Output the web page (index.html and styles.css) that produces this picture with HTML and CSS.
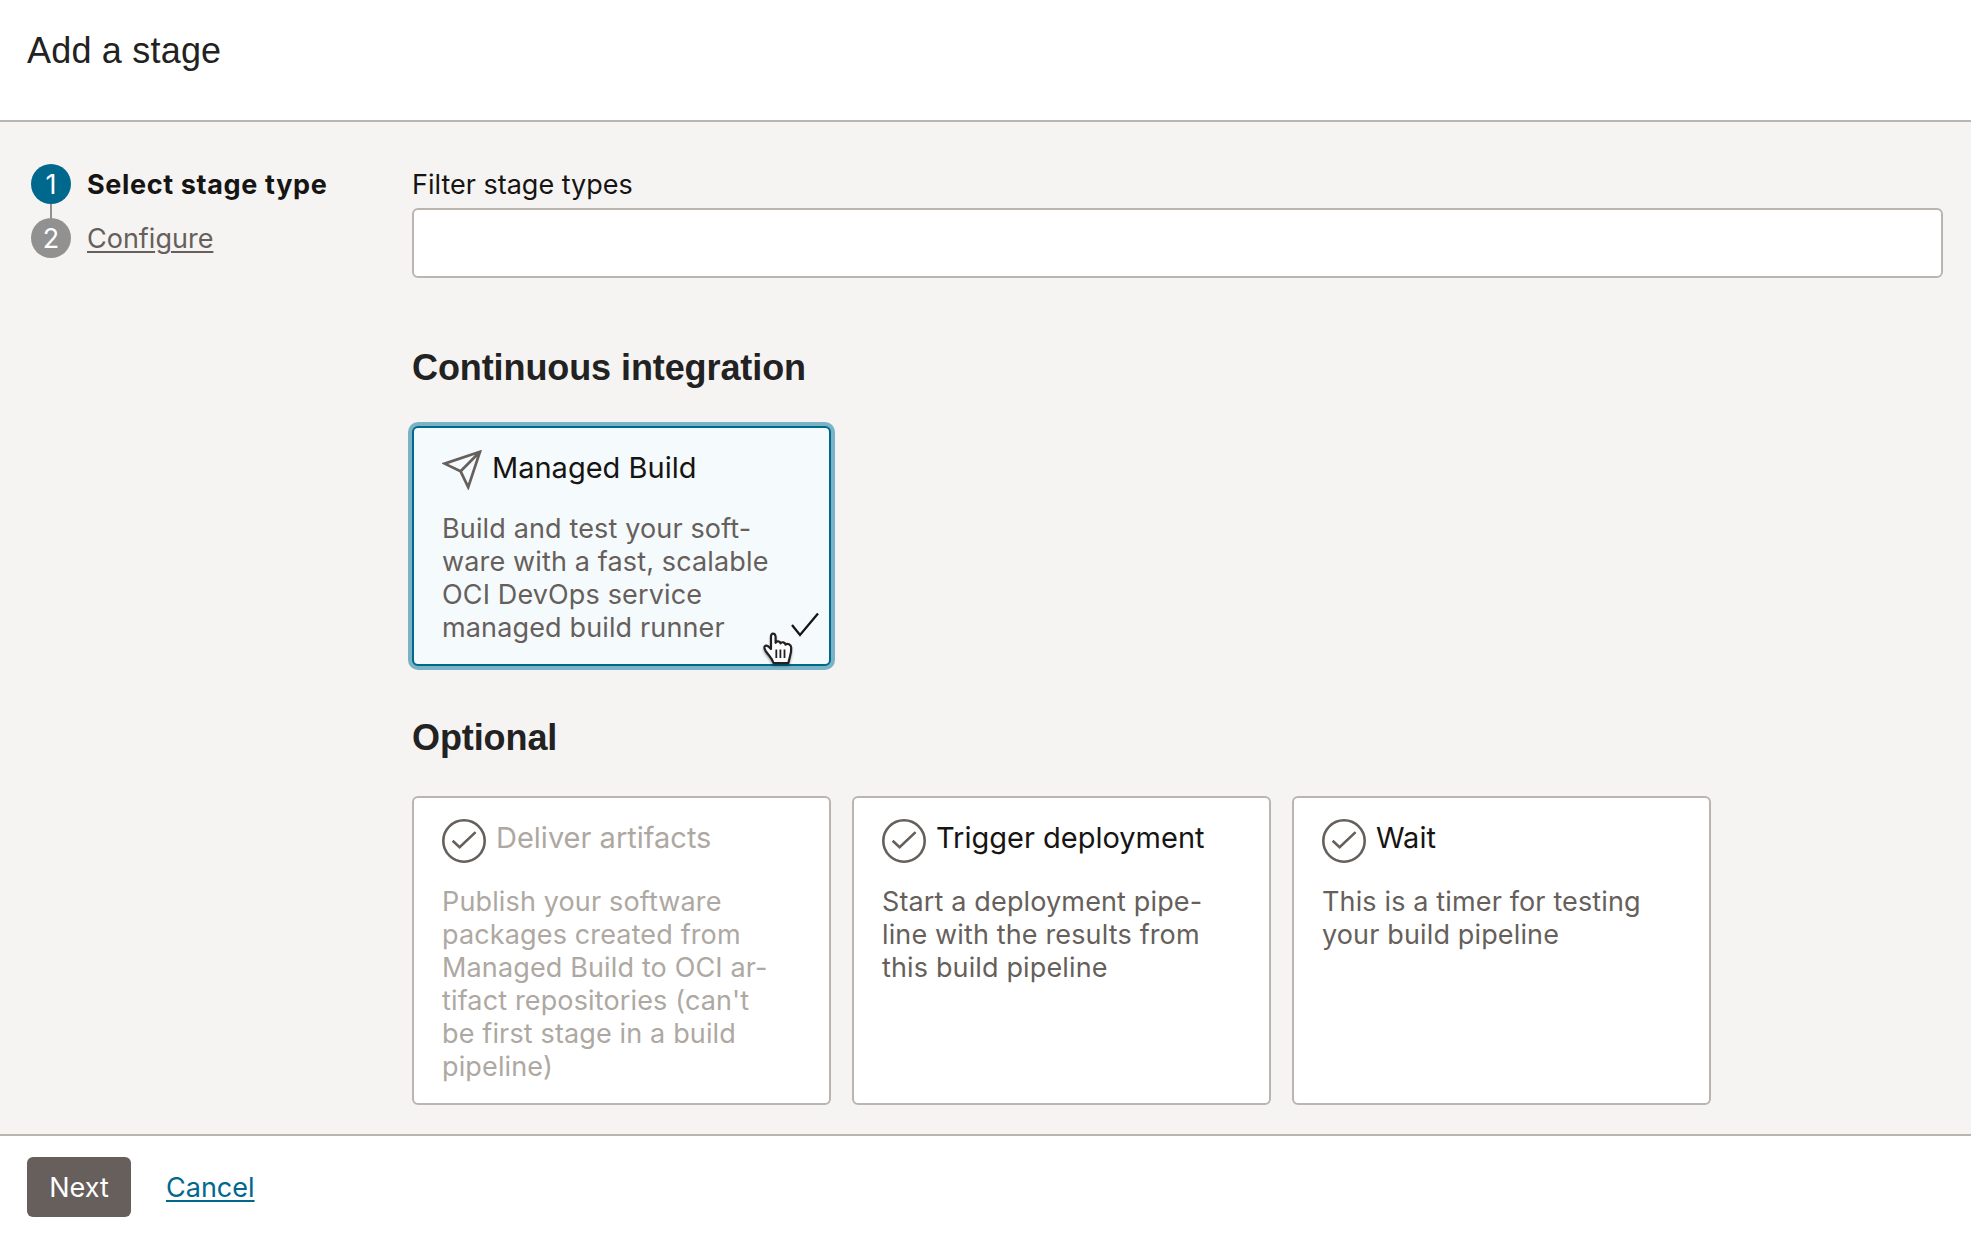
FILE: index.html
```html
<!DOCTYPE html>
<html lang="en">
<head>
<meta charset="utf-8">
<title>Add a stage</title>
<link rel="stylesheet" href="styles.css">
</head>
<body>
<header class="header"><h1 class="title">Add a stage</h1></header>

<div class="content">
  <ol class="steps">
    <li class="step step-active"><span class="step-num">1</span><span class="step-label">Select stage type</span></li>
    <li class="step-line"></li>
    <li class="step"><span class="step-num">2</span><a class="step-label">Configure</a></li>
  </ol>

  <main class="main">
    <label class="filter-label" for="filter">Filter stage types</label>
    <input class="filter-input" id="filter" type="text">

    <section class="group">
      <h2 class="group-title">Continuous integration</h2>
      <div class="cards">
        <article class="card card-selected">
          <div class="card-head">
            <svg class="icon-plane" viewBox="0 0 40 40"><path d="M38 1.8 2.6 13.6 18.6 21.3 26.2 37.2ZM38 1.8 18.6 21.3"/></svg>
            <h3 class="card-title">Managed Build</h3>
          </div>
          <p class="card-text">Build and test your soft-<br>ware with a fast, scalable<br>OCI DevOps service<br>managed build runner</p>
          <svg class="selected-check" viewBox="0 0 30 26"><path d="M2 13 10 23 28 1.5"/></svg>
          <svg class="pointer" viewBox="0 0 36 40">
            <path d="M10 19V7.2C9.5 2.5 14.2 2.5 14.6 7V12.8C15.5 10.8 19 11 19.5 13.4C20.7 11.4 24 12.2 24.5 14.6C26.5 13 30 14.2 30.2 17.5C30.6 23 28.6 26.6 27.4 33H12.5C11 28 7.5 25.3 4.6 20.8C2.8 17.8 3 16 4.8 15.6C6.8 15.2 8.4 17 10 19Z"/>
            <path class="pointer-lines" d="M15.3 19.5V28M19.4 19.5V28M23.5 19.5V28"/>
          </svg>
        </article>
      </div>
    </section>

    <section class="group group-optional">
      <h2 class="group-title">Optional</h2>
      <div class="cards">
        <article class="card card-disabled">
          <div class="card-head">
            <svg class="icon-check" viewBox="0 0 44 44"><circle cx="22" cy="22" r="20.7"/><path d="M10.6 21.8 17.6 28.2 33.6 13.1"/></svg>
            <h3 class="card-title">Deliver artifacts</h3>
          </div>
          <p class="card-text">Publish your software<br>packages created from<br>Managed Build to OCI ar-<br>tifact repositories (can't<br>be first stage in a build<br>pipeline)</p>
        </article>
        <article class="card">
          <div class="card-head">
            <svg class="icon-check" viewBox="0 0 44 44"><circle cx="22" cy="22" r="20.7"/><path d="M10.6 21.8 17.6 28.2 33.6 13.1"/></svg>
            <h3 class="card-title">Trigger deployment</h3>
          </div>
          <p class="card-text">Start a deployment pipe-<br>line with the results from<br>this build pipeline</p>
        </article>
        <article class="card">
          <div class="card-head">
            <svg class="icon-check" viewBox="0 0 44 44"><circle cx="22" cy="22" r="20.7"/><path d="M10.6 21.8 17.6 28.2 33.6 13.1"/></svg>
            <h3 class="card-title">Wait</h3>
          </div>
          <p class="card-text">This is a timer for testing<br>your build pipeline</p>
        </article>
      </div>
    </section>
  </main>
</div>

<footer class="footer">
  <button class="next" type="button">Next</button>
  <a class="cancel">Cancel</a>
</footer>
</body>
</html>
```
FILE: styles.css
```css
* { box-sizing: border-box; margin: 0; padding: 0; }

body {
  display: flex;
  flex-direction: column;
  height: 1233px;
  overflow: hidden;
  background: #fff;
  color: #161513;
  font: 27px/33px Inter, sans-serif;
  letter-spacing: 0.14px;
}

.header { height: 122px; padding: 29px 27px 0; border-bottom: 2px solid #bbb5b0; }
.title { font: 400 36px/44px "Liberation Sans", sans-serif; letter-spacing: 0.2px; color: #222; }

.content {
  display: grid;
  grid-template-columns: 381px 1fr;
  height: 1012px;
  padding: 42px 28px 0 31px;
  background: #f5f4f2;
}

.steps { list-style: none; }
.step { display: flex; align-items: center; gap: 16px; height: 40px; }
.step-num {
  width: 40px;
  height: 40px;
  border-radius: 50%;
  background: #919191;
  color: #fff;
  line-height: 41px;
  text-align: center;
}
.step-label {
  padding-top: 1px;
  line-height: 40px;
  letter-spacing: 0;
  color: #665f5b;
  text-decoration: underline;
  text-decoration-thickness: 2px;
  text-underline-offset: 3px;
}
.step-active .step-num { background: #00688c; }
.step-active .step-label { color: #161513; font-weight: 700; letter-spacing: 0.64px; text-decoration: none; }
.step-line { width: 2px; height: 14px; margin-left: 19px; background: #919191; }

.main { padding-top: 4px; }
.filter-label { display: block; margin-bottom: 7px; letter-spacing: 0; }
.filter-input {
  display: block;
  width: 100%;
  height: 70px;
  border: 2px solid #bbb5b0;
  border-radius: 6px;
  background: #fff;
  outline: none;
}

.group { margin-top: 68px; }
.group-optional { margin-top: 50px; }
.group-title {
  margin-bottom: 36px;
  font: 700 36px/44px "Liberation Sans", sans-serif;
  letter-spacing: -0.09px;
  color: #222;
}

.cards { display: flex; gap: 21px; }
.card {
  width: 419px;
  height: 309px;
  padding: 22px 28px;
  border: 2px solid #bbb5b0;
  border-radius: 6px;
  background: #fff;
}
.card-selected {
  position: relative;
  height: 240px;
  border-color: #00688c;
  background: #f5fafd;
  box-shadow: 0 0 0 4px #7ab2c6;
}
.card-head { display: flex; align-items: flex-start; gap: 10px; margin-bottom: 22px; }
.card-title { font-size: 29px; font-weight: 400; line-height: 36px; letter-spacing: 0; }
.card-text { color: #665f5b; white-space: nowrap; }
.card-disabled .card-title, .card-disabled .card-text { color: #aea8a2; }

.icon-plane { width: 40px; height: 40px; fill: none; stroke: #665f5b; stroke-width: 2.7; }
.icon-check { width: 44px; height: 44px; margin-top: -1px; fill: none; stroke: #665f5b; stroke-width: 2.6; }
.selected-check {
  position: absolute;
  right: 9px;
  bottom: 26px;
  width: 30px;
  height: 26px;
  fill: none;
  stroke: #161513;
  stroke-width: 2.3;
}
.pointer {
  position: absolute;
  right: 32px;
  bottom: -6px;
  width: 36px;
  height: 40px;
  fill: #fff;
  stroke: #222;
  stroke-width: 2.2;
  stroke-linejoin: round;
  filter: drop-shadow(0 2px 1px rgba(0, 0, 0, 0.35));
}
.pointer-lines { stroke-width: 1.8; }

.footer {
  display: flex;
  align-items: flex-start;
  gap: 35px;
  height: 99px;
  padding: 21px 27px 0;
  border-top: 2px solid #bbb5b0;
}
.next {
  width: 104px;
  height: 60px;
  border: 0;
  border-radius: 6px;
  background: #665f5b;
  color: #fff;
  font: inherit;
}
.cancel {
  padding-top: 1px;
  line-height: 60px;
  letter-spacing: 0;
  color: #00688c;
  text-decoration: underline;
  text-decoration-thickness: 2px;
  text-underline-offset: 3px;
}
```
